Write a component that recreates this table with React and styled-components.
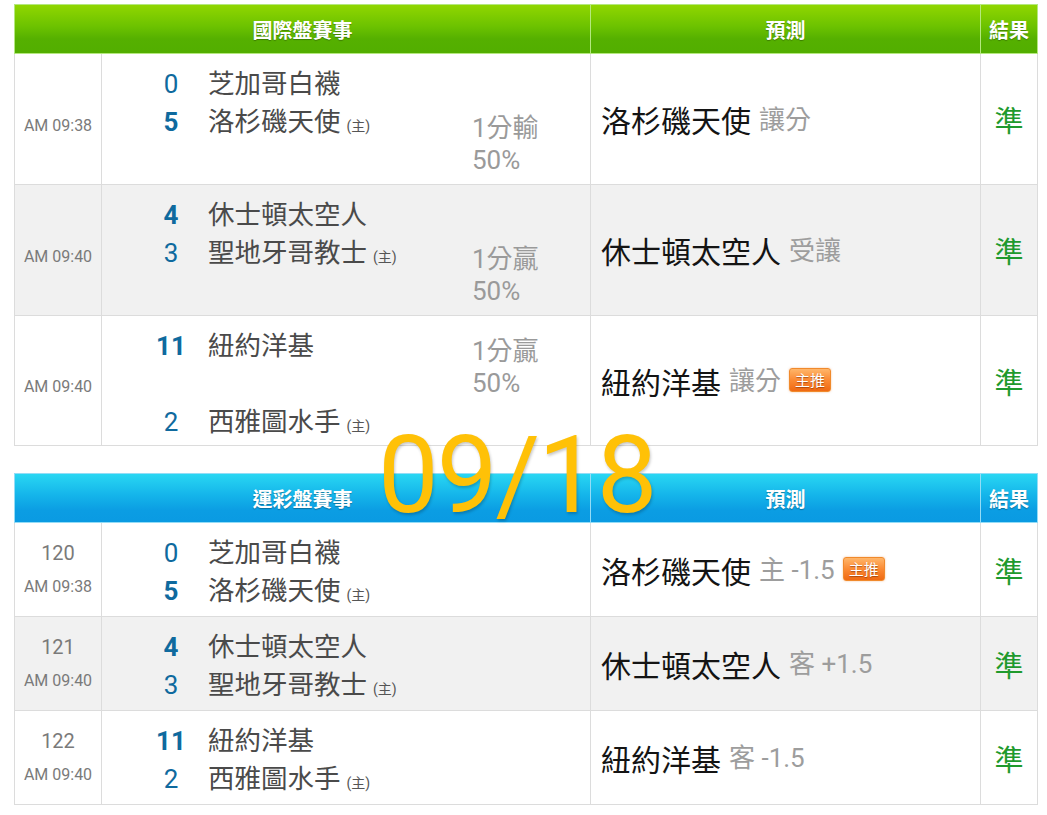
import React from "react";
import styled, { createGlobalStyle, css } from "styled-components";

const Global = createGlobalStyle`
  * { box-sizing: border-box; }
  body {
    margin: 0;
    background: #fff;
    font-family: Roboto, "Noto Sans CJK TC", sans-serif;
  }
`;

const Page = styled.div`
  position: relative;
  width: 1047px;
  padding: 4px 0 12px 14px;
`;

const Table = styled.section`
  width: 1024px;
  & + & {
    margin-top: 27px;
  }
`;

const headerSkins = {
  green: css`
    background: linear-gradient(#92d700 0%, #6cc200 45%, #55b000 70%, #52ae00 100%);
    --edge: #b4e87e;
  `,
  blue: css`
    background: linear-gradient(#2ad8f3 0%, #14b4ea 45%, #0b9de3 75%, #0a9ae2 100%);
    --edge: #94dcf6;
  `,
};

const HeaderRow = styled.div`
  display: grid;
  grid-template-columns: 576px 390px 58px;
  height: 50px;
  ${(p) => headerSkins[p.$skin]}
`;

const HeaderCell = styled.div`
  display: flex;
  align-items: center;
  justify-content: center;
  border-top: 1px solid var(--edge);
  border-bottom: 1px solid var(--edge);
  border-left: 1px solid var(--edge);
  &:last-child {
    border-right: 1px solid var(--edge);
  }
  color: #fff;
  font-family: "Noto Sans CJK TC", sans-serif;
  font-weight: 700;
  font-size: 20px;
  text-shadow: 0 1px 1px rgba(0, 0, 0, 0.3);
`;

const Row = styled.div`
  display: grid;
  grid-template-columns: 87px 489px 390px 58px;
  height: ${(p) => p.$h}px;
  background: ${(p) => (p.$alt ? "#f1f1f1" : "#fff")};
  border-bottom: 1px solid #dcdcdc;
`;

const Cell = styled.div`
  border-left: 1px solid #dcdcdc;
  &:last-child {
    border-right: 1px solid #dcdcdc;
  }
`;

const TimeCell = styled(Cell)`
  display: flex;
  flex-direction: column;
  align-items: center;
  justify-content: center;
  padding-top: ${(p) => p.$shift || 0}px;
  color: #7a7a7a;
`;

const GameNo = styled.div`
  font-size: 20px;
  line-height: 33px;
`;

const Time = styled.div`
  font-size: 16px;
  line-height: 33px;
`;

const TeamsCell = styled(Cell)`
  display: flex;
  align-items: flex-start;
  padding: 11px 0 0 38px;
`;

const TeamList = styled.div`
  display: flex;
  flex-direction: column;
`;

const TeamLine = styled.div`
  display: flex;
  align-items: baseline;
  height: 38px;
  line-height: 38px;
  margin-top: ${(p) => p.$gap || 0}px;
`;

const Score = styled.span`
  width: 62px;
  margin-right: 6px;
  text-align: center;
  font-size: 26px;
  color: #0f6a9e;
  font-weight: ${(p) => (p.$win ? 700 : 400)};
`;

const TeamName = styled.span`
  font-size: 26.5px;
  color: #4a4a4a;
`;

const Home = styled.span`
  margin-left: 6px;
  font-size: 14px;
  color: #555;
`;

const Handicap = styled.div`
  margin-left: auto;
  width: 118px;
  margin-top: ${(p) => p.$top}px;
  font-size: 26px;
  line-height: 32px;
  color: #9a9a9a;
`;

const PredictCell = styled(Cell)`
  display: flex;
  align-items: center;
  padding-left: 10px;
`;

const PredTeam = styled.span`
  font-size: 30px;
  color: #141414;
`;

const PredNote = styled.span`
  margin-left: 8px;
  font-size: 26px;
  color: #9d9d9d;
  position: relative;
  top: -2px;
`;

const Badge = styled.span`
  display: inline-flex;
  align-items: center;
  justify-content: center;
  margin-left: 8px;
  width: 42px;
  height: 24px;
  border-radius: 3px;
  border: 1px solid #f08a2c;
  background: linear-gradient(#ffb66a 0%, #fb8a34 50%, #ef6912 100%);
  box-shadow: 0 0 2px rgba(240, 120, 30, 0.5);
  color: #fff;
  font-family: "Noto Sans CJK TC", sans-serif;
  font-size: 15px;
  line-height: 1;
  text-shadow: 0 1px 1px rgba(120, 40, 0, 0.6);
  position: relative;
  top: -1px;
`;

const ResultCell = styled(Cell)`
  display: flex;
  align-items: center;
  justify-content: center;
  font-size: 29px;
  color: #1f9a2d;
`;

const DateStamp = styled.div`
  position: absolute;
  left: 378px;
  top: 421px;
  font-family: Roboto, sans-serif;
  font-size: 108px;
  line-height: 1;
  letter-spacing: -2px;
  color: #ffc107;
  text-shadow: 1px 2px 3px rgba(0, 0, 0, 0.22);
  pointer-events: none;
`;

const intl = [
  {
    time: "AM 09:38",
    h: 131,
    teams: [
      { s: "0", n: "芝加哥白襪" },
      { s: "5", n: "洛杉磯天使", win: true, home: true },
    ],
    hc: ["1分輸", "50%"],
    pred: "洛杉磯天使",
    note: "讓分",
  },
  {
    time: "AM 09:40",
    h: 131,
    alt: true,
    teams: [
      { s: "4", n: "休士頓太空人", win: true },
      { s: "3", n: "聖地牙哥教士", home: true },
    ],
    hc: ["1分贏", "50%"],
    pred: "休士頓太空人",
    note: "受讓",
  },
  {
    time: "AM 09:40",
    h: 130,
    spread: true,
    teams: [
      { s: "11", n: "紐約洋基", win: true },
      { s: "2", n: "西雅圖水手", home: true },
    ],
    hc: ["1分贏", "50%"],
    pred: "紐約洋基",
    note: "讓分",
    badge: true,
  },
];

const lottery = [
  {
    no: "120",
    time: "AM 09:38",
    teams: [
      { s: "0", n: "芝加哥白襪" },
      { s: "5", n: "洛杉磯天使", win: true, home: true },
    ],
    pred: "洛杉磯天使",
    note: "主 -1.5",
    badge: true,
  },
  {
    no: "121",
    time: "AM 09:40",
    alt: true,
    teams: [
      { s: "4", n: "休士頓太空人", win: true },
      { s: "3", n: "聖地牙哥教士", home: true },
    ],
    pred: "休士頓太空人",
    note: "客 +1.5",
  },
  {
    no: "122",
    time: "AM 09:40",
    teams: [
      { s: "11", n: "紐約洋基", win: true },
      { s: "2", n: "西雅圖水手", home: true },
    ],
    pred: "紐約洋基",
    note: "客 -1.5",
  },
];

function Teams({ teams, spread }) {
  return (
    <TeamList>
      {teams.map((t, i) => (
        <TeamLine key={i} $gap={spread && i === 1 ? 38 : 0}>
          <Score $win={t.win}>{t.s}</Score>
          <TeamName>{t.n}</TeamName>
          {t.home && <Home>(主)</Home>}
        </TeamLine>
      ))}
    </TeamList>
  );
}

function Prediction({ g }) {
  return (
    <PredictCell>
      <PredTeam>{g.pred}</PredTeam>
      <PredNote>{g.note}</PredNote>
      {g.badge && <Badge>主推</Badge>}
    </PredictCell>
  );
}

function Header({ skin, title }) {
  return (
    <HeaderRow $skin={skin}>
      <HeaderCell>{title}</HeaderCell>
      <HeaderCell>預測</HeaderCell>
      <HeaderCell>結果</HeaderCell>
    </HeaderRow>
  );
}

export default function App() {
  return (
    <>
      <Global />
      <Page>
        <Table>
          <Header skin="green" title="國際盤賽事" />
          {intl.map((g, i) => (
            <Row key={i} $h={g.h} $alt={g.alt}>
              <TimeCell $shift={12}>
                <Time>{g.time}</Time>
              </TimeCell>
              <TeamsCell>
                <Teams teams={g.teams} spread={g.spread} />
                <Handicap $top={g.spread ? 8 : 47}>
                  <div>{g.hc[0]}</div>
                  <div>{g.hc[1]}</div>
                </Handicap>
              </TeamsCell>
              <Prediction g={g} />
              <ResultCell>準</ResultCell>
            </Row>
          ))}
        </Table>
        <Table>
          <Header skin="blue" title="運彩盤賽事" />
          {lottery.map((g, i) => (
            <Row key={i} $h={94} $alt={g.alt}>
              <TimeCell>
                <GameNo>{g.no}</GameNo>
                <Time>{g.time}</Time>
              </TimeCell>
              <TeamsCell>
                <Teams teams={g.teams} />
              </TeamsCell>
              <Prediction g={g} />
              <ResultCell>準</ResultCell>
            </Row>
          ))}
        </Table>
        <DateStamp>09/18</DateStamp>
      </Page>
    </>
  );
}
